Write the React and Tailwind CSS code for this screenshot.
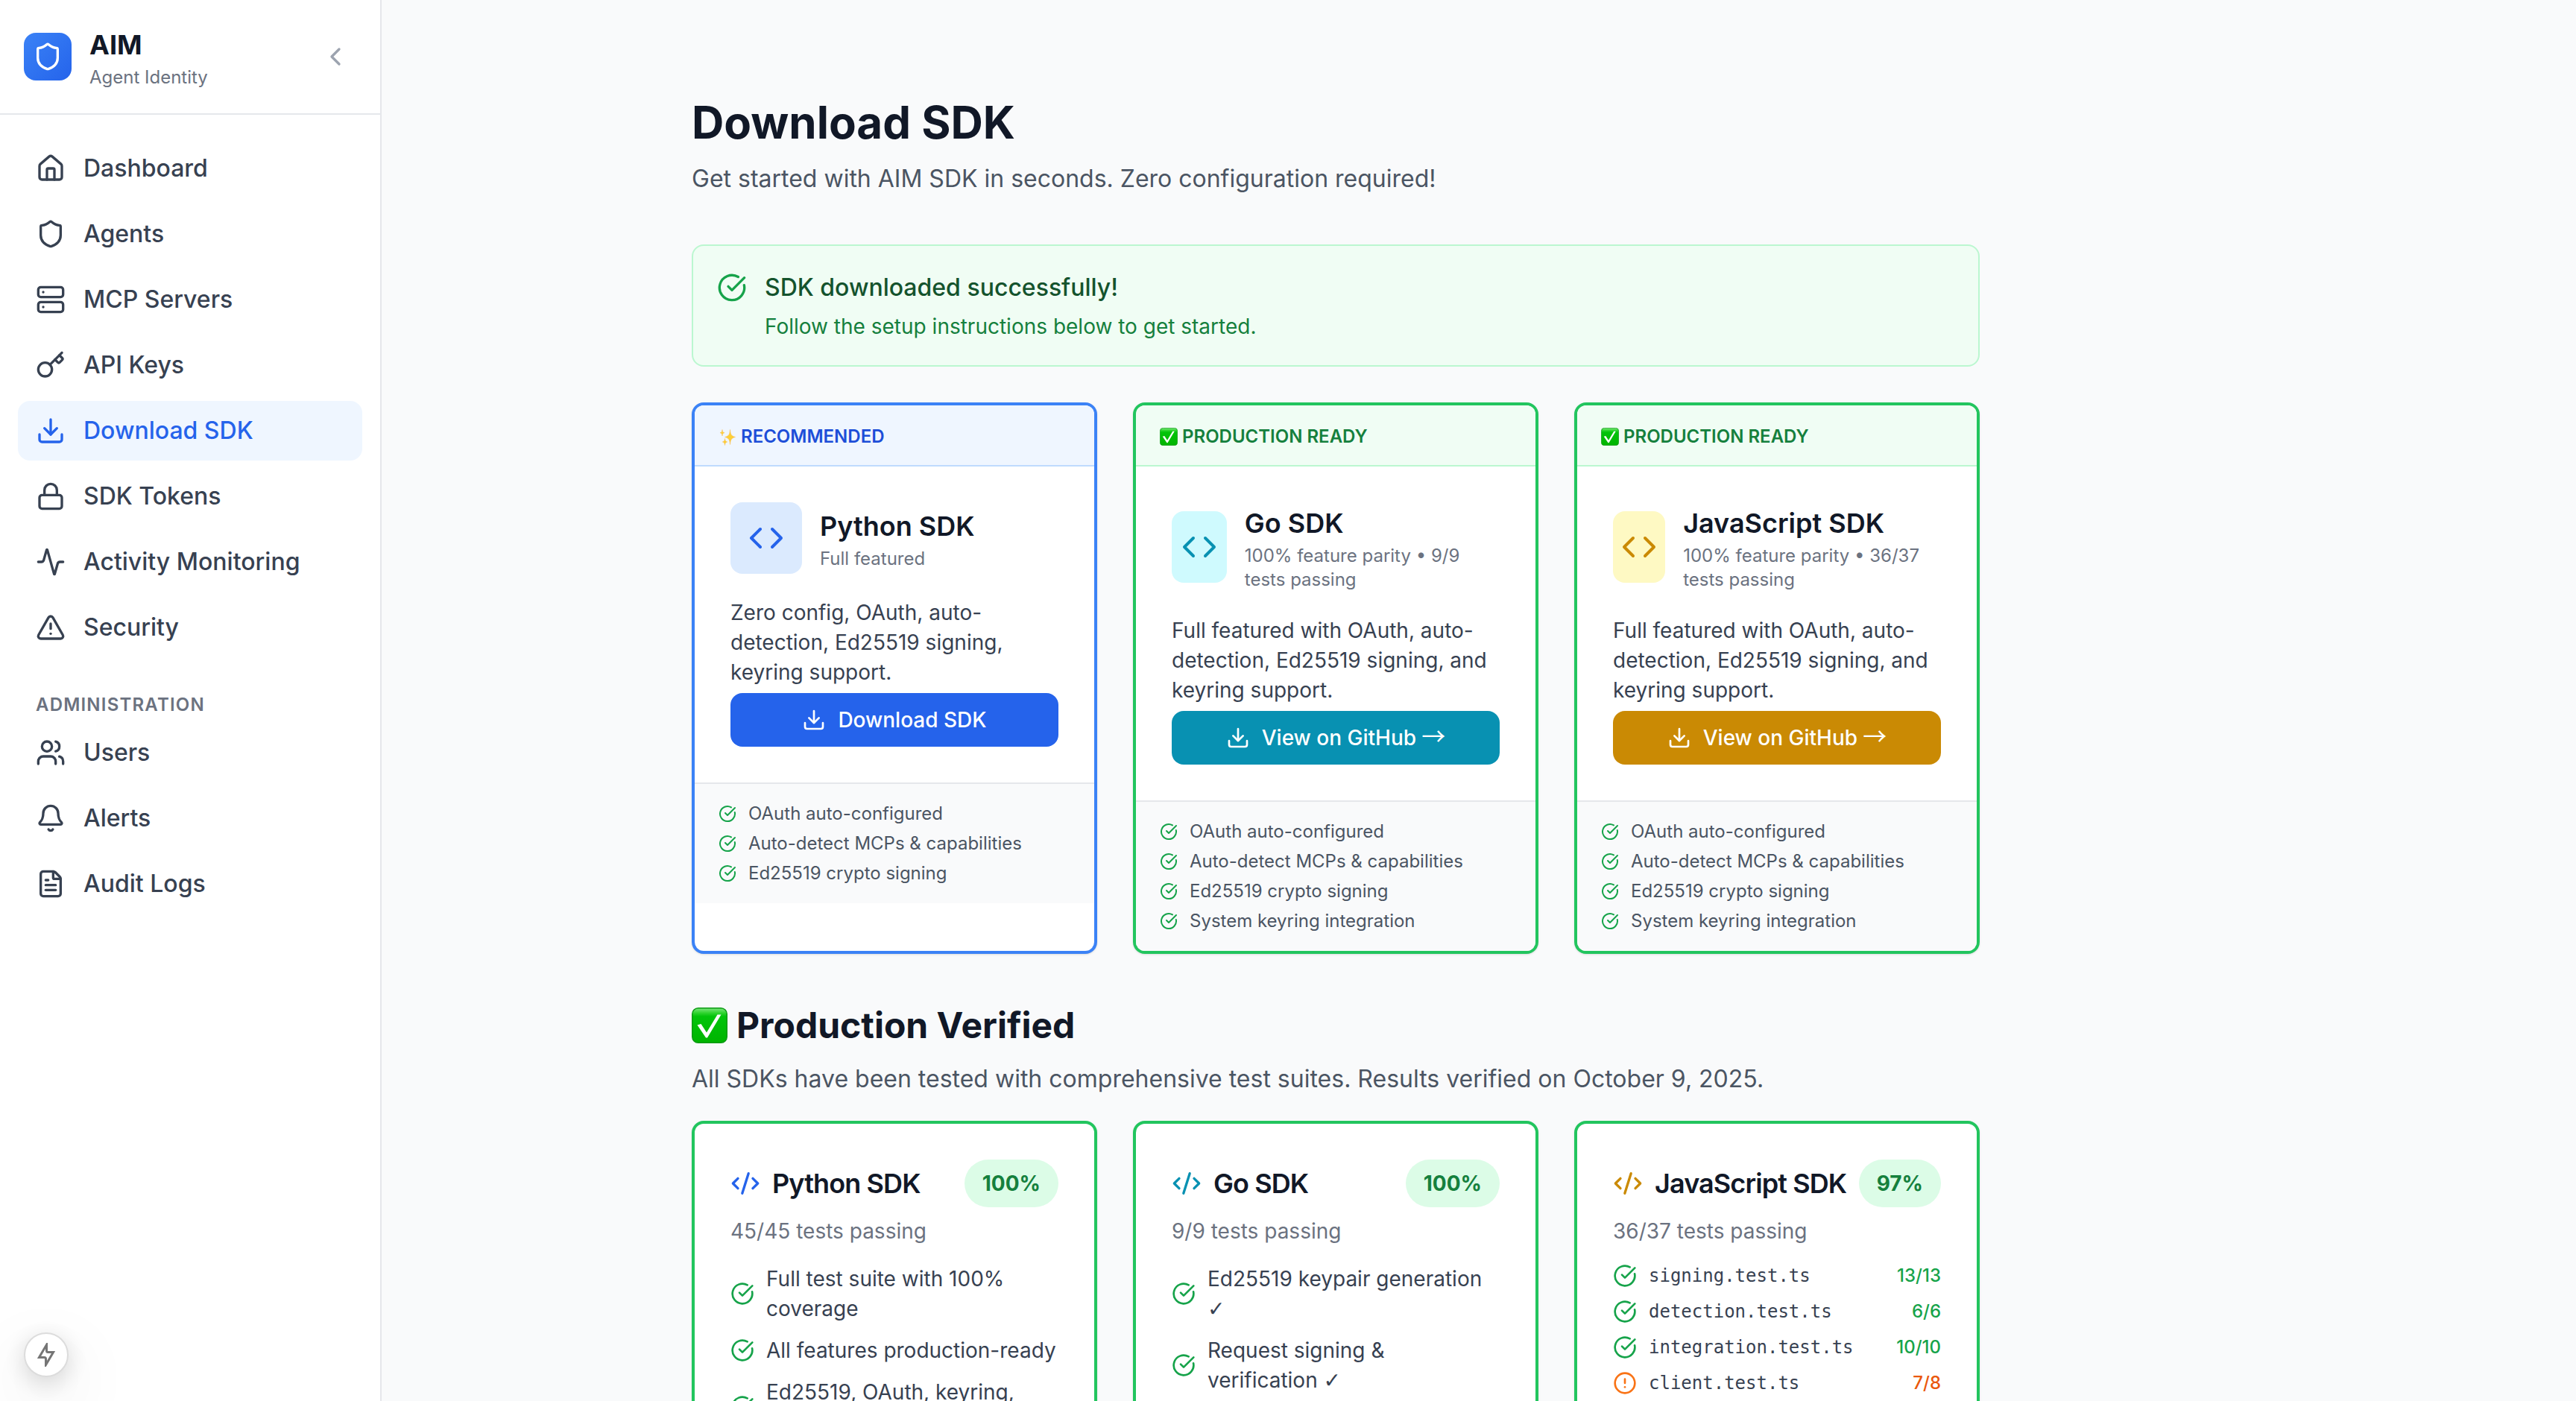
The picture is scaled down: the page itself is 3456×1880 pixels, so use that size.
import React from "react";
import {
  Activity,
  Bell,
  ChevronLeft,
  CircleAlert,
  CircleCheckBig,
  Code,
  CodeXml,
  Download,
  FileText,
  House,
  Key,
  Lock,
  Server,
  Shield,
  TriangleAlert,
  Users,
} from "lucide-react";

const mainNav = [
  { label: "Dashboard", icon: House },
  { label: "Agents", icon: Shield },
  { label: "MCP Servers", icon: Server },
  { label: "API Keys", icon: Key },
  { label: "Download SDK", icon: Download, active: true },
  { label: "SDK Tokens", icon: Lock },
  { label: "Activity Monitoring", icon: Activity },
  { label: "Security", icon: TriangleAlert },
];

const adminNav = [
  { label: "Users", icon: Users },
  { label: "Alerts", icon: Bell },
  { label: "Audit Logs", icon: FileText },
];

const green = {
  border: "border-[#22c55e]",
  header: "bg-[#f0fdf4] border-[#bbf7d0] text-[#15803d]",
};

const sdks = [
  {
    name: "Python SDK",
    note: "Full featured",
    text: "Zero config, OAuth, auto-detection, Ed25519 signing, keyring support.",
    action: "Download SDK",
    tag: "RECOMMENDED",
    mark: Sparkles,
    border: "border-[#3b82f6]",
    header: "bg-[#eff6ff] border-[#bfdbfe] text-[#1d4ed8]",
    tile: "bg-[#dbeafe] text-[#2563eb]",
    button: "bg-[#2563eb]",
    features: ["OAuth auto-configured", "Auto-detect MCPs & capabilities", "Ed25519 crypto signing"],
  },
  {
    name: "Go SDK",
    note: "100% feature parity • 9/9 tests passing",
    text: "Full featured with OAuth, auto-detection, Ed25519 signing, and keyring support.",
    action: "View on GitHub",
    arrow: true,
    tag: "PRODUCTION READY",
    mark: CheckMark,
    ...green,
    tile: "bg-[#cffafe] text-[#0891b2]",
    button: "bg-[#0891b2]",
    features: [
      "OAuth auto-configured",
      "Auto-detect MCPs & capabilities",
      "Ed25519 crypto signing",
      "System keyring integration",
    ],
  },
  {
    name: "JavaScript SDK",
    note: "100% feature parity • 36/37 tests passing",
    text: "Full featured with OAuth, auto-detection, Ed25519 signing, and keyring support.",
    action: "View on GitHub",
    arrow: true,
    tag: "PRODUCTION READY",
    mark: CheckMark,
    ...green,
    tile: "bg-[#fef9c3] text-[#ca8a04]",
    button: "bg-[#ca8a04]",
    features: [
      "OAuth auto-configured",
      "Auto-detect MCPs & capabilities",
      "Ed25519 crypto signing",
      "System keyring integration",
    ],
  },
];

const results = [
  {
    name: "Python SDK",
    color: "text-[#2563eb]",
    score: "100%",
    passing: "45/45 tests passing",
    points: [
      { label: "Full test suite with 100% coverage" },
      { label: "All features production-ready" },
      { label: "Ed25519, OAuth, keyring, MCP" },
    ],
  },
  {
    name: "Go SDK",
    color: "text-[#0891b2]",
    score: "100%",
    passing: "9/9 tests passing",
    points: [
      { label: "Ed25519 keypair generation", ticked: true },
      { label: "Request signing & verification", ticked: true },
    ],
  },
  {
    name: "JavaScript SDK",
    color: "text-[#ca8a04]",
    score: "97%",
    passing: "36/37 tests passing",
    files: [
      { file: "signing.test.ts", count: "13/13", ok: true },
      { file: "detection.test.ts", count: "6/6", ok: true },
      { file: "integration.test.ts", count: "10/10", ok: true },
      { file: "client.test.ts", count: "7/8", ok: false },
    ],
  },
];

function CheckMark({ className }) {
  return (
    <svg viewBox="0 0 48 48" className={className} aria-hidden="true">
      <defs>
        <linearGradient id="check-face" x1="0" y1="0" x2="0" y2="1">
          <stop offset="0" stopColor="#7fe67f" />
          <stop offset="0.14" stopColor="#2fd42f" />
          <stop offset="0.24" stopColor="#02c40a" />
          <stop offset="1" stopColor="#00b400" />
        </linearGradient>
      </defs>
      <rect x="0.75" y="0.75" width="46.5" height="46.5" rx="8" fill="url(#check-face)" stroke="#0a9a12" strokeWidth="1.5" />
      <path d="M7.5 23.5 L12.5 22 L20 33.5 L34.5 9.5 L39.5 9.5 L21 40.5 L19 40.5 Z" fill="#fff" />
    </svg>
  );
}

function Sparkles({ className }) {
  return (
    <svg viewBox="0 0 48 48" className={className} fill="#fdd035" stroke="#f9b64a" strokeWidth="1" aria-hidden="true">
      <path d="M31 5 C32 18 34 22 45 25 C34 28 32 32 31 45 C30 32 28 28 17 25 C28 22 30 18 31 5 Z" />
      <path d="M10 5 C10.500 10.500 11.500 12 16 13.500 C11.500 15 10.500 16.500 10 22 C9.500 16.500 8.500 15 4 13.500 C8.500 12 9.500 10.500 10 5 Z" />
      <path d="M17 29 C17.500 35 19 36.500 23.500 38 C19 39.500 17.500 41 17 47 C16.500 41 15 39.500 10.500 38 C15 36.500 16.500 35 17 29 Z" />
    </svg>
  );
}

function NavItem({ label, icon: Icon, active }) {
  return (
    <a
      href="#"
      aria-current={active ? "page" : undefined}
      className={
        "flex items-center gap-6 rounded-2xl px-6 py-4 text-[32px] leading-[48px] font-medium " +
        (active ? "bg-[#eff6ff] text-[#2563eb]" : "text-[#374151]")
      }
    >
      <Icon className="size-10 shrink-0" />
      <span>{label}</span>
    </a>
  );
}

function Sidebar() {
  return (
    <aside className="flex w-[512px] shrink-0 flex-col border-r-2 border-[#e5e7eb] bg-white">
      <div className="flex items-center justify-between border-b-2 border-[#e5e7eb] p-8">
        <div className="flex items-center gap-6">
          <div className="flex size-16 items-center justify-center rounded-2xl bg-linear-to-br from-[#3b82f6] to-[#2563eb] text-white">
            <Shield className="size-10" />
          </div>
          <div>
            <div className="text-[36px] leading-[56px] font-bold text-[#111827]">AIM</div>
            <div className="text-[24px] leading-[32px] text-[#6b7280]">Agent Identity</div>
          </div>
        </div>
        <button type="button" aria-label="Collapse sidebar" className="rounded-lg p-2 text-[#9ca3af]">
          <ChevronLeft className="size-10" />
        </button>
      </div>
      <nav className="flex flex-col gap-2 px-6 py-8">
        {mainNav.map((item) => (
          <NavItem key={item.label} {...item} />
        ))}
        <div className="mt-10 px-6 text-[24px] leading-[32px] font-semibold tracking-wider text-[#6b7280]">
          ADMINISTRATION
        </div>
        {adminNav.map((item) => (
          <NavItem key={item.label} {...item} />
        ))}
      </nav>
    </aside>
  );
}

function SdkCard({ name, note, text, action, arrow, tag, mark: Mark, border, header, tile, button, features }) {
  return (
    <article className={"overflow-hidden rounded-2xl border-4 bg-white shadow-sm " + border}>
      <div className={"flex items-center gap-1.5 border-b-2 px-8 pt-[26px] pb-[22px] text-[24px] leading-[32px] font-semibold " + header}>
        <Mark className="size-6" />
        <span>{tag}</span>
      </div>
      <div className="p-12">
        <div className="mb-8 flex items-center gap-6">
          <div className={"flex size-24 items-center justify-center rounded-2xl " + tile}>
            <Code className="size-12" />
          </div>
          <div>
            <h3 className="text-[36px] leading-[56px] font-semibold text-[#111827]">{name}</h3>
            <p className="text-[24px] leading-[32px] text-[#6b7280]">{note}</p>
          </div>
        </div>
        <p className="mb-2 text-[28px] leading-[40px] text-[#374151]">{text}</p>
        <button
          type="button"
          className={"flex w-full items-center justify-center gap-4 rounded-2xl py-4 text-[28px] leading-[40px] font-medium text-white " + button}
        >
          <Download className="size-8" />
          <span>
            {action}
            {arrow && <span className="font-['Noto_Sans_CJK_JP',sans-serif] text-[32px] leading-none font-normal"> →</span>}
          </span>
        </button>
      </div>
      <ul className="flex flex-col gap-2 border-t-2 border-[#e5e7eb] bg-[#f9fafb] px-8 py-6 text-[24px] leading-[32px] text-[#4b5563]">
        {features.map((feature) => (
          <li key={feature} className="flex items-center gap-4">
            <CircleCheckBig className="size-6 shrink-0 text-[#16a34a]" />
            <span>{feature}</span>
          </li>
        ))}
      </ul>
    </article>
  );
}

function ResultCard({ name, color, score, passing, points, files }) {
  return (
    <article className="rounded-2xl border-4 border-[#22c55e] bg-white p-12 shadow-sm">
      <div className="mb-3 flex items-center justify-between">
        <div className="flex items-center gap-4">
          <CodeXml className={"size-10 shrink-0 " + color} />
          <h3 className="text-[36px] leading-[56px] font-semibold tracking-tight whitespace-nowrap text-[#111827]">{name}</h3>
        </div>
        <span className="rounded-full bg-[#dcfce7] px-6 py-3 text-[28px] leading-[40px] font-bold text-[#15803d]">{score}</span>
      </div>
      <p className="mb-6 text-[28px] leading-[40px] text-[#6b7280]">{passing}</p>
      <ul className="flex flex-col gap-4">
        {points &&
          points.map(({ label, ticked }) => (
            <li key={label} className="flex items-center gap-4 text-[28px] leading-[40px] text-[#374151]">
              <CircleCheckBig className="size-8 shrink-0 text-[#16a34a]" />
              <span>
                {label}
                {ticked && (
                  <>
                    {" "}
                    <span className="font-['DejaVu_Sans',sans-serif] leading-none font-bold">✓</span>
                  </>
                )}
              </span>
            </li>
          ))}
        {files &&
          files.map(({ file, count, ok }) => (
            <li key={file} className="flex items-center gap-4 text-[24px] leading-[32px]">
              {ok ? (
                <CircleCheckBig className="size-8 shrink-0 text-[#16a34a]" />
              ) : (
                <CircleAlert className="size-8 shrink-0 text-[#f97316]" />
              )}
              <span className="flex-1 font-['DejaVu_Sans_Mono',monospace] text-[#374151]">{file}</span>
              <span className={"font-medium " + (ok ? "text-[#16a34a]" : "text-[#ea580c]")}>{count}</span>
            </li>
          ))}
      </ul>
    </article>
  );
}

export default function App() {
  return (
    <div className="flex h-screen overflow-hidden bg-[#f9fafb] font-['Inter',sans-serif] text-[#111827]">
      <Sidebar />
      <main className="min-w-0 flex-1">
        <div className="max-w-[2560px]">
          <div className="mx-auto max-w-[1792px] px-8 py-32">
            <h1 className="text-[60px] leading-[72px] font-bold">Download SDK</h1>
            <p className="mt-4 text-[32px] leading-[48px] text-[#4b5563]">
              Get started with AIM SDK in seconds. Zero configuration required!
            </p>

            <div role="status" className="mt-16 flex items-start gap-6 rounded-2xl border-2 border-[#bbf7d0] bg-[#f0fdf4] p-8">
              <CircleCheckBig className="mt-1 size-10 shrink-0 text-[#16a34a]" />
              <div>
                <p className="text-[32px] leading-[48px] font-medium text-[#14532d]">SDK downloaded successfully!</p>
                <p className="mt-2 text-[28px] leading-[40px] text-[#15803d]">
                  Follow the setup instructions below to get started.
                </p>
              </div>
            </div>

            <section className="mt-12 grid grid-cols-3 gap-12">
              {sdks.map((sdk) => (
                <SdkCard key={sdk.name} {...sdk} />
              ))}
            </section>

            <section className="mt-16">
              <h2 className="flex items-center gap-3 text-[48px] leading-[64px] font-bold">
                <CheckMark className="size-12" />
                <span>Production Verified</span>
              </h2>
              <p className="mt-4 text-[32px] leading-[48px] text-[#4b5563]">
                All SDKs have been tested with comprehensive test suites. Results verified on October 9, 2025.
              </p>
              <div className="mt-8 grid grid-cols-3 gap-12">
                {results.map((result) => (
                  <ResultCard key={result.name} {...result} />
                ))}
              </div>
            </section>
          </div>
        </div>
      </main>

      <button
        type="button"
        aria-label="Open developer tools"
        className="fixed bottom-8 left-8 flex size-[60px] items-center justify-center rounded-full border-2 border-[#dcdcdc] bg-white text-[#757575] shadow-[0_8px_32px_rgba(0,0,0,0.16),0_32px_96px_rgba(0,0,0,0.12)]"
      >
        <svg viewBox="0 0 24 32" className="h-8 w-6" fill="none" stroke="currentColor" strokeWidth="3" aria-hidden="true">
          <path d="M12.500 2.500 L2.500 19.500 H9.500 Q11.500 19.500 11.500 21.500 V29.500 L21.500 12.500 H14.500 Q12.500 12.500 12.500 10.500 V2.500 Z" />
        </svg>
      </button>
    </div>
  );
}
